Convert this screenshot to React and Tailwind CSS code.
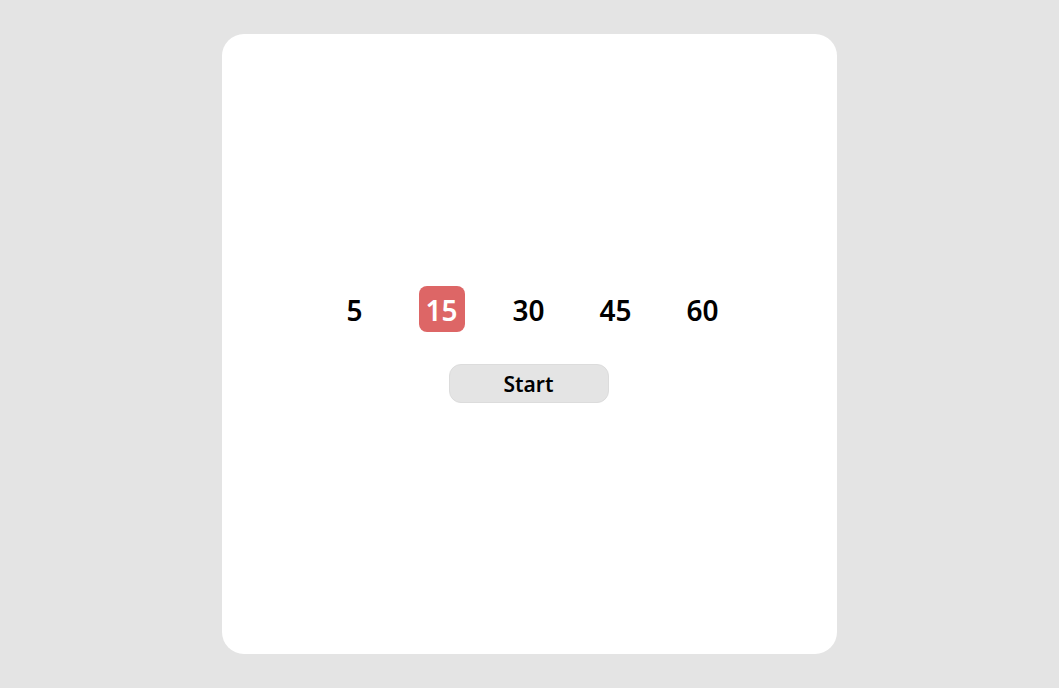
import React, { useState } from "react";

const OPTIONS = [5, 15, 30, 45, 60];

export default function App() {
  const [minutes, setMinutes] = useState(15);

  return (
    <div
      className="flex h-[688px] w-full items-center justify-center bg-[#e4e4e4]"
      style={{ fontFamily: '"Noto Sans", sans-serif' }}
    >
      <div className="flex h-[620px] w-[615px] flex-col items-center justify-center rounded-[22px] bg-white">
        <div className="mr-[2px] flex items-center gap-[41px]">
          {OPTIONS.map((m) => (
            <button
              key={m}
              onClick={() => setMinutes(m)}
              className={
                m === minutes
                  ? "flex h-[46px] w-[46px] items-center justify-center rounded-[8px] bg-[#dd6666] pt-[2px] text-[28px] font-semibold text-white"
                  : "flex h-[46px] w-[46px] items-center justify-center rounded-[8px] pt-[2px] text-[28px] font-semibold text-black"
              }
            >
              {m}
            </button>
          ))}
        </div>
        <button className="mt-[32px] mr-[2px] h-[39px] w-[160px] rounded-[12px] border border-[#dcdcdc] bg-[#e4e4e4] pt-[3px] text-[21px] font-semibold text-black">
          Start
        </button>
      </div>
    </div>
  );
}
